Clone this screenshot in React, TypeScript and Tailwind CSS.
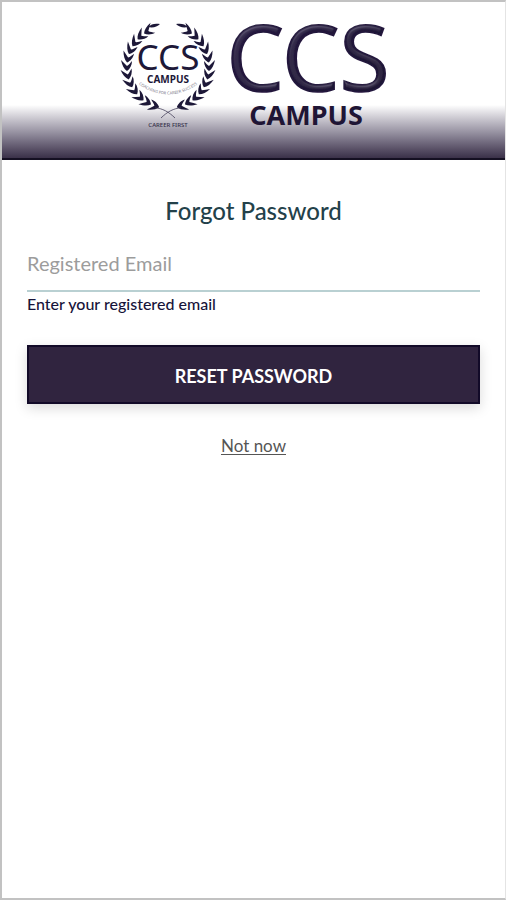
import { useState } from "react";

const leaves = [18, 30, 42, 54, 66, 78, 90, 102, 114, 126, 138, 150];

// One branch of the laurel, growing clockwise from the crossed stems
const Branch = () => (
  <g>
    {leaves.map((angle) => (
      <path
        key={angle}
        transform={`rotate(${angle} 49 47) translate(49 88)`}
        d="M4 0C2 3 -2 5 -7 6C-5 4 -3 2 -1 0C-2 -2 -4 -3 -6 -5C-2 -5 2 -3 4 0Z"
      />
    ))}
    <path d="M41 4C36 3 32 4 29 7C34 8 38 7 41 4Z" />
    <path
      d="M36 88C43 88 50 92 56 98"
      fill="none"
      stroke="#45405a"
      strokeWidth="0.8"
    />
  </g>
);

const Logo = () => (
  <svg
    viewBox="0 0 270 110"
    className="h-[110px] w-[270px] overflow-visible"
    role="img"
    aria-label="CCS Campus"
    fontFamily="'Noto Sans', 'Open Sans', sans-serif"
  >
    <defs>
      <linearGradient id="ink" x1="0" y1="0" x2="1" y2="1">
        <stop offset="0" stopColor="#2f2348" />
        <stop offset="0.35" stopColor="#22163c" />
        <stop offset="1" stopColor="#1b1230" />
      </linearGradient>
      <filter id="bevel" x="-5%" y="-5%" width="110%" height="110%">
        <feGaussianBlur in="SourceAlpha" stdDeviation="1.5" result="blur" />
        <feSpecularLighting
          in="blur"
          surfaceScale="3"
          specularConstant="0.5"
          specularExponent="16"
          lightingColor="#a89fc0"
          result="light"
        >
          <feDistantLight azimuth="250" elevation="40" />
        </feSpecularLighting>
        <feComposite in="light" in2="SourceAlpha" operator="in" result="shine" />
        <feComposite
          in="SourceGraphic"
          in2="shine"
          operator="arithmetic"
          k1="0"
          k2="1"
          k3="0.4"
          k4="0"
        />
      </filter>
      <path id="motto" d="M14 60Q49 89 84 60" />
    </defs>
    <g fill="#1d1838">
      <Branch />
      <g transform="translate(98 0) scale(-1 1)">
        <Branch />
      </g>
      <text x="49" y="50" fontSize="35" textAnchor="middle">
        CCS
      </text>
      <text x="49" y="63" fontSize="10" fontWeight="700" textAnchor="middle">
        CAMPUS
      </text>
      <text fontSize="4" fill="#777385">
        <textPath href="#motto" startOffset="50%" textAnchor="middle">
          COACHING FOR CAREER SUCCESS
        </textPath>
      </text>
      <text x="49" y="107" fontSize="6" fontWeight="500" textAnchor="middle" fill="#35304a">
        CAREER FIRST
      </text>
    </g>
    <g fill="url(#ink)" stroke="#22163c" filter="url(#bevel)">
      <text x="189" y="71" fontSize="91" strokeWidth="1.6" textAnchor="middle">
        CCS
      </text>
    </g>
    <text
      x="187"
      y="105"
      fontSize="27"
      fontWeight="700"
      textAnchor="middle"
      fill="#1f1535"
    >
      CAMPUS
    </text>
  </svg>
);

const App = () => {
  const [email, setEmail] = useState("");

  return (
    <div className="min-h-screen border-2 border-r border-[#c2c2c2] border-r-[#e4e4e4] bg-white font-['Lato',sans-serif]">
      <header className="flex h-[158px] justify-center border-b-2 border-[#151022] bg-linear-to-b from-white from-66% via-[#948f9f] via-84% to-[#3b3149] pt-[18px]">
        <Logo />
      </header>

      <main className="px-[25px] pt-9">
        <h1 className="text-center text-2xl leading-[30px] font-medium text-[#23414a]">
          Forgot Password
        </h1>
        <form onSubmit={(e) => e.preventDefault()}>
          <input
            type="email"
            value={email}
            onChange={(e) => setEmail(e.target.value)}
            placeholder="Registered Email"
            aria-label="Registered Email"
            aria-describedby="email-hint"
            className="mt-2.5 block h-14 w-full border-b-2 border-[#b9d0d2] text-xl text-[#23414a] outline-none placeholder:text-[#9c9c9c]"
          />
          <p
            id="email-hint"
            className="text-base leading-6 font-medium text-[#17143a]"
          >
            Enter your registered email
          </p>
          <button
            type="submit"
            className="mt-[29px] h-[59px] w-full border-2 border-[#120a28] bg-[#30243f] pt-0.5 text-lg font-bold text-white shadow-[0_4px_12px_rgba(0,0,0,0.15)]"
          >
            RESET PASSWORD
          </button>
        </form>
        <div className="mt-7 text-center">
          <a
            href="#login"
            className="text-[17px] leading-7 text-[#555] underline underline-offset-2"
          >
            Not now
          </a>
        </div>
      </main>
    </div>
  );
};

export default App;
